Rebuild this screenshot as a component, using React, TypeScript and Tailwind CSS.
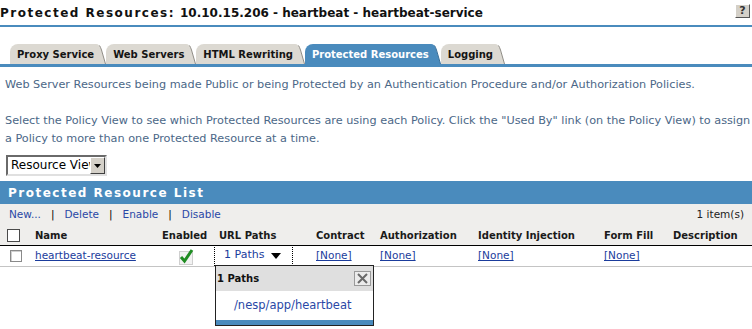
import React from 'react'

const tabs = ['Proxy Service', 'Web Servers', 'HTML Rewriting', 'Protected Resources', 'Logging']

function Tab({ label, active }: { label: string; active: boolean }) {
  const fill = active ? '#4a8bbd' : '#dcd9d2'
  return (
    <div className="flex h-[20px] items-stretch">
      <div
        className={`flex items-center rounded-tl-[8px] pl-[7px] pr-[2px] text-[10px] font-bold ${
          active ? 'bg-[#4a8bbd] text-white' : 'bg-[#dcd9d2] text-[#141414]'
        }`}
      >
        {label}
      </div>
      <svg width="10" height="20" viewBox="0 0 10 20" className="block">
        <path d="M0 0 Q3.5 0 5 5 L9.5 20 L0 20 Z" fill={fill} />
        <path d="M3.5 1.5 Q4.5 3 5.5 6 L9.5 20" fill="none" stroke={active ? '#3a6f98' : '#8f8c86'} strokeWidth="1" />
      </svg>
    </div>
  )
}

function Checkbox({ big }: { big?: boolean }) {
  return big ? (
    <span className="block h-[13px] w-[13px] border border-[#4a4a4a] bg-white" />
  ) : (
    <span className="block h-[12px] w-[12px] border border-[#8a8a8a] bg-white shadow-[inset_1px_1px_0_#d0d0d0]" />
  )
}

function NoneLink() {
  return <a className="text-[#1b3c9c] underline">[None]</a>
}

export default function App() {
  return (
    <div className="relative h-[329px] w-[752px] overflow-hidden bg-white font-['DejaVu_Sans',sans-serif] text-[10.5px] text-[#4b6787]">
      {/* page title */}
      <div className="flex h-[25px] items-center pr-[2px]">
        <span className="text-[12px] font-bold tracking-[1.5px] text-[#111]">Protected Resources:</span>
        <span className="ml-[5px] text-[12px] font-bold text-[#111]">10.10.15.206 - heartbeat - heartbeat-service</span>
        <span className="mb-[4px] ml-auto flex h-[14px] w-[15px] items-center justify-center border border-b-[#555] border-l-white border-r-[#555] border-t-white bg-[#d4d0c8] text-[11px] font-bold leading-none text-[#333]">
          ?
        </span>
      </div>
      <div className="h-[2px] bg-[#4a8bbd]" />

      {/* tabs */}
      <div className="mt-[17px] flex pl-[10px]">
        {tabs.map((t) => (
          <Tab key={t} label={t} active={t === 'Protected Resources'} />
        ))}
      </div>
      <div className="h-[3px] bg-[#4a8bbd]" />

      {/* description */}
      <div className="mt-[9px] px-[5px] text-[11.25px] leading-[18px]">
        <p className="whitespace-nowrap">Web Server Resources being made Public or being Protected by an Authentication Procedure and/or Authorization Policies.</p>
        <p className="mt-[18px] whitespace-nowrap">
          Select the Policy View to see which Protected Resources are using each Policy. Click the "Used By" link (on the Policy View) to assign
          <br />a Policy to more than one Protected Resource at a time.
        </p>
      </div>

      {/* view select */}
      <div className="ml-[6px] mt-[7px] flex h-[21px] w-[101px] border-2 border-b-[#e0e0e0] border-l-[#6a6a6a] border-r-[#e0e0e0] border-t-[#6a6a6a] bg-white">
        <span className="flex-1 overflow-hidden whitespace-nowrap pl-[3px] text-[12px] leading-[17px] text-black">Resource View</span>
        <span className="flex w-[15px] items-center justify-center border border-b-[#404040] border-l-white border-r-[#404040] border-t-white bg-[#d4d0c8]">
          <svg width="7" height="4" viewBox="0 0 7 4">
            <path d="M0 0 H7 L3.5 4 Z" fill="#000" />
          </svg>
        </span>
      </div>

      {/* list */}
      <div className="mt-[5px]">
        <div className="flex h-[23px] items-center bg-[#4a8bbd] pl-[8px] text-[12px] font-bold tracking-[1.5px] text-white">
          Protected Resource List
        </div>
        <div className="bg-[#efeeec]">
          <div className="flex h-[22px] items-center justify-between pl-[9px] pr-[8px] text-[10.5px]">
            <div className="flex items-center gap-[10px] text-[#2a48a6]">
              <a>New...</a>
              <span className="text-black">|</span>
              <a>Delete</a>
              <span className="text-black">|</span>
              <a>Enable</a>
              <span className="text-black">|</span>
              <a>Disable</a>
            </div>
            <span className="text-[#222]">1 item(s)</span>
          </div>
          <div className="grid h-[20px] grid-cols-[28px_127px_57px_97px_64px_98px_126px_69px_84px] items-center border-b border-black pl-[2px] text-[10px] font-bold text-[#1a1a1a]">
            <div className="pl-[5px]">
              <Checkbox big />
            </div>
            <div className="pl-[5px]">Name</div>
            <div className="pl-[5px]">Enabled</div>
            <div className="pl-[5px]">URL Paths</div>
            <div className="pl-[5px]">Contract</div>
            <div className="pl-[5px]">Authorization</div>
            <div className="pl-[5px]">Identity Injection</div>
            <div className="pl-[5px]">Form Fill</div>
            <div className="pl-[5px]">Description</div>
          </div>
        </div>
        <div className="grid h-[21px] grid-cols-[28px_127px_57px_97px_64px_98px_126px_69px_84px] items-center border-b border-[#c4c4c4] pl-[2px]">
          <div className="pl-[8px]">
            <Checkbox />
          </div>
          <div className="pl-[5px]">
            <a className="text-[#1b3c9c] underline">heartbeat-resource</a>
          </div>
          <div className="flex justify-center">
            <svg width="18" height="17" viewBox="0 0 18 17">
              <rect x="2.5" y="3.5" width="13" height="13" fill="#f2f2f2" stroke="#cfcfcf" />
              <path d="M4 9 L7.5 13 L15 2" fill="none" stroke="#1f8c22" strokeWidth="3" />
            </svg>
          </div>
          <div className="relative h-full">
            <div className="-mt-[1px] flex h-[21px] w-[79px] items-center border border-dotted border-black pl-[9px] text-[11px] text-[#1b3c9c]">
              1 Paths
              <svg width="10" height="6" viewBox="0 0 10 6" className="ml-[7px]">
                <path d="M0 0 H10 L5 6 Z" fill="#000" />
              </svg>
            </div>
            {/* paths popup */}
            <div className="absolute left-[1px] top-[19px] z-10 w-[159px] border border-[#222] bg-white">
              <div className="flex h-[25px] items-center justify-between bg-[#dfdfdf] pl-[1px] pr-[2px]">
                <span className="text-[10px] font-bold text-[#111]">1 Paths</span>
                <span className="flex h-[15px] w-[17px] items-center justify-center border border-[#9a9a9a] bg-[#ececec]">
                  <svg width="11" height="11" viewBox="0 0 11 11">
                    <path d="M1 1 L10 10 M10 1 L1 10" stroke="#6a6a6a" strokeWidth="2" />
                  </svg>
                </span>
              </div>
              <div className="flex h-[29px] items-center pl-[18px] text-[11.5px] text-[#2a48a6]">/nesp/app/heartbeat</div>
              <div className="h-[5px] bg-[#4a8bbd]" />
            </div>
          </div>
          <div className="pl-[5px]">
            <NoneLink />
          </div>
          <div className="pl-[5px]">
            <NoneLink />
          </div>
          <div className="pl-[5px]">
            <NoneLink />
          </div>
          <div className="pl-[5px]">
            <NoneLink />
          </div>
          <div />
        </div>
      </div>
    </div>
  )
}
